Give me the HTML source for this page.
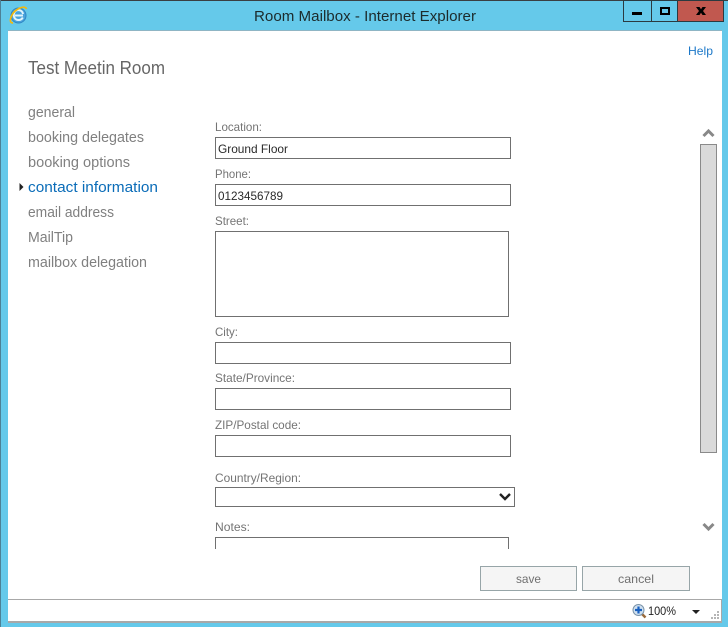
<!DOCTYPE html>
<html><head><meta charset="utf-8"><title>Room Mailbox - Internet Explorer</title>
<style>
html,body{margin:0;padding:0;width:728px;height:627px;overflow:hidden;background:#65c9ea}
svg{position:absolute;left:0;top:0;display:block}
text{font-family:"Liberation Sans",sans-serif;white-space:pre}
.nav{font-size:14.6px;fill:#808080}
.lbl{font-size:12px;fill:#747474}
.val{font-size:12px;fill:#2a2a2a}
.box{fill:#fff;stroke:#707070;stroke-width:1}
</style></head>
<body>
<svg width="728" height="627" viewBox="0 0 728 627" xmlns="http://www.w3.org/2000/svg" shape-rendering="crispEdges">
<rect width="728" height="627" fill="#65c9ea"/>
<rect width="728" height="1" fill="#3a3f42"/>
<rect x="0" y="0" width="1" height="627" fill="#4d8196"/>
<rect x="8" y="30" width="714" height="1" fill="#8fb5c4"/>
<rect x="8" y="31" width="714" height="568" fill="#fff"/>
<!-- window buttons -->
<rect x="623.500" y="0.500" width="100" height="21" fill="#65c9ea" stroke="#2b3a40"/>
<rect x="678" y="1" width="45" height="20" fill="#c1584f"/>
<rect x="651" y="1" width="1" height="20" fill="#2b3a40"/>
<rect x="677" y="1" width="1" height="20" fill="#2b3a40"/>
<rect x="632" y="12" width="10" height="3" fill="#000"/>
<rect x="661" y="8" width="8" height="6" fill="none" stroke="#000" stroke-width="2"/>
<path d="M696 7h3.500l1.500 2.300 1.500-2.300h3.500l-3 4 3 4h-3.500l-1.500-2.300-1.500 2.300h-3.500l3-4z" fill="#000" shape-rendering="auto"/>
<!-- IE logo -->
<g shape-rendering="auto">
<circle cx="18.500" cy="15.500" r="7.500" fill="#4aa3dc"/>
<circle cx="18.500" cy="15.500" r="7.500" fill="none" stroke="#2f86c4" stroke-width="1"/>
<path d="M15 14.500h8v2h-8z" fill="#e2f4fb"/>
<path d="M23 14a4.600 4.600 0 0 0-9-.5c-.8 3.500 1 6.500 4.500 6.500 2 0 3.500-1 4.300-2.500" fill="none" stroke="#e2f4fb" stroke-width="2"/>
<path d="M26.500 9C25 4.500 15 9 12 15c-2.500 5-2 8 1 8" fill="none" stroke="#f2b90f" stroke-width="1.700"/>
</g>
<text x="254" y="21" font-size="15" fill="#1c2b2c" textLength="222" lengthAdjust="spacingAndGlyphs">Room Mailbox - Internet Explorer</text>
<text x="28" y="74" font-size="18" fill="#666" textLength="137" lengthAdjust="spacingAndGlyphs">Test Meetin Room</text>
<text x="688" y="55" font-size="12" fill="#1c78c8" textLength="25" lengthAdjust="spacingAndGlyphs">Help</text>
<!-- nav -->
<text class="nav" x="28" y="117" textLength="47" lengthAdjust="spacingAndGlyphs">general</text>
<text class="nav" x="28" y="142" textLength="116" lengthAdjust="spacingAndGlyphs">booking delegates</text>
<text class="nav" x="28" y="167" textLength="102" lengthAdjust="spacingAndGlyphs">booking options</text>
<path d="M19.500 183v8l4-4z" fill="#222" shape-rendering="auto"/>
<text class="nav" x="28" y="192" style="fill:#0a6cb8" textLength="130" lengthAdjust="spacingAndGlyphs">contact information</text>
<text class="nav" x="28" y="217" textLength="86" lengthAdjust="spacingAndGlyphs">email address</text>
<text class="nav" x="28" y="242" textLength="45" lengthAdjust="spacingAndGlyphs">MailTip</text>
<text class="nav" x="28" y="267" textLength="119" lengthAdjust="spacingAndGlyphs">mailbox delegation</text>
<!-- form -->
<text class="lbl" x="215" y="131" textLength="47" lengthAdjust="spacingAndGlyphs">Location:</text>
<rect class="box" x="215.500" y="137.500" width="295" height="21"/>
<text class="val" x="218" y="153" textLength="70" lengthAdjust="spacingAndGlyphs">Ground Floor</text>
<text class="lbl" x="215" y="178" textLength="36" lengthAdjust="spacingAndGlyphs">Phone:</text>
<rect class="box" x="215.500" y="184.500" width="295" height="21"/>
<text class="val" x="218" y="200" textLength="65" lengthAdjust="spacingAndGlyphs">0123456789</text>
<text class="lbl" x="215" y="225" textLength="34" lengthAdjust="spacingAndGlyphs">Street:</text>
<rect class="box" x="215.500" y="231.500" width="293" height="85"/>
<text class="lbl" x="215" y="336" textLength="23" lengthAdjust="spacingAndGlyphs">City:</text>
<rect class="box" x="215.500" y="342.500" width="295" height="21"/>
<text class="lbl" x="215" y="382" textLength="80" lengthAdjust="spacingAndGlyphs">State/Province:</text>
<rect class="box" x="215.500" y="388.500" width="295" height="21"/>
<text class="lbl" x="215" y="429" textLength="86" lengthAdjust="spacingAndGlyphs">ZIP/Postal code:</text>
<rect class="box" x="215.500" y="435.500" width="295" height="21"/>
<text class="lbl" x="215" y="482" textLength="86" lengthAdjust="spacingAndGlyphs">Country/Region:</text>
<rect class="box" x="215.500" y="487.500" width="299" height="19"/>
<path d="M500 494l5 5 5-5" fill="none" stroke="#222" stroke-width="2.400" shape-rendering="auto"/>
<text class="lbl" x="215" y="531" textLength="35" lengthAdjust="spacingAndGlyphs">Notes:</text>
<path d="M215.500 549v-11.500h293v11.500" fill="none" stroke="#707070"/>
<!-- scrollbar -->
<path d="M703.500 136l5-5 5 5" fill="none" stroke="#888" stroke-width="3" shape-rendering="auto"/>
<rect x="700.500" y="144.500" width="16" height="308" fill="#dadada" stroke="#8a8a8a"/>
<path d="M703.500 524l5 5 5-5" fill="none" stroke="#888" stroke-width="3" shape-rendering="auto"/>
<!-- buttons -->
<rect x="480.500" y="566.500" width="96" height="24" fill="#f5f5f5" stroke="#97a5a8"/>
<text x="516" y="583" font-size="12" fill="#707070" textLength="25" lengthAdjust="spacingAndGlyphs">save</text>
<rect x="582.500" y="566.500" width="107" height="24" fill="#f5f5f5" stroke="#97a5a8"/>
<text x="618" y="583" font-size="12" fill="#707070" textLength="36" lengthAdjust="spacingAndGlyphs">cancel</text>
<!-- status bar -->
<rect x="8" y="599" width="714" height="1" fill="#a8a8a8"/>
<rect x="8" y="600" width="713" height="21" fill="#fff"/>
<rect x="721" y="600" width="1" height="22" fill="#a8a8a8"/>
<rect x="8" y="621" width="714" height="2" fill="#a8a8a8"/>
<g shape-rendering="auto">
<path d="M641.500 613.500l4 4" stroke="#9a6a3a" stroke-width="2.500"/>
<circle cx="638.500" cy="610" r="5.500" fill="#cfe0f0" stroke="#7a93a8"/>
<path d="M635 610h7M638.500 606.500v7" stroke="#1860c0" stroke-width="2.200"/>
</g>
<text x="648" y="615" font-size="12" fill="#222" textLength="28" lengthAdjust="spacingAndGlyphs">100%</text>
<path d="M692 610h8l-4 4z" fill="#222" shape-rendering="auto"/>
<g fill="#b5b5b5">
<rect x="717" y="611" width="2" height="2"/>
<rect x="714" y="614" width="2" height="2"/><rect x="717" y="614" width="2" height="2"/>
<rect x="711" y="617" width="2" height="2"/><rect x="714" y="617" width="2" height="2"/><rect x="717" y="617" width="2" height="2"/>
</g>
</svg>
</body></html>
